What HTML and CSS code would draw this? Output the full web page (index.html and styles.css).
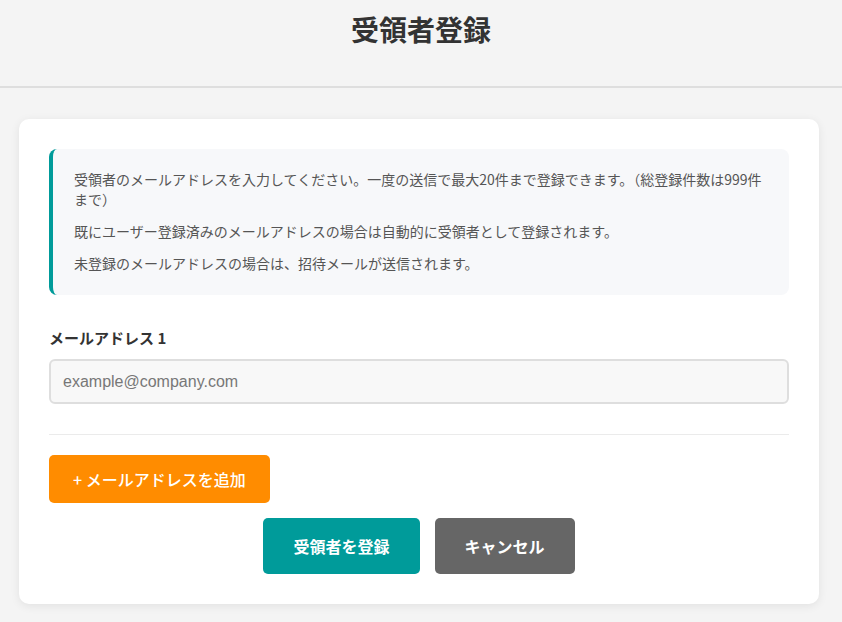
FILE: index.html
```html
<!DOCTYPE html>
<html lang="ja">

<head>
  <meta charset="utf-8">
  <title>受領者登録</title>
  <link rel="stylesheet" href="styles.css">
</head>

<body>
  <header class="page-header">
    <h1 class="page-title">受領者登録</h1>
  </header>

  <main class="card">
    <div class="info-box">
      <p>受領者のメールアドレスを入力してください。一度の送信で最大20件まで登録できます。（総登録件数は999件まで）</p>
      <p>既にユーザー登録済みのメールアドレスの場合は自動的に受領者として登録されます。</p>
      <p>未登録のメールアドレスの場合は、招待メールが送信されます。</p>
    </div>

    <div class="field">
      <label class="field-label" for="email1">メールアドレス 1</label>
      <input class="field-input" id="email1" type="email" placeholder="example@company.com">
    </div>

    <hr class="divider">

    <button class="add-button">+ メールアドレスを追加</button>

    <div class="actions">
      <button class="submit-button">受領者を登録</button>
      <button class="cancel-button">キャンセル</button>
    </div>
  </main>
</body>

</html>
```

FILE: styles.css
```css
body {
  margin: 0;
  background-color: #f4f4f4;
  font-family: "Noto Sans CJK JP", "Noto Sans", sans-serif;
  color: #333;
}

.page-header {
  height: 86px;
  border-bottom: 2px solid #dedede;
  text-align: center;
}

.page-title {
  margin: 0;
  padding-top: 12px;
  font-size: 28px;
  line-height: 34px;
  font-weight: bold;
  color: #333;
}

.card {
  margin: 31px 23px 18px 19px;
  padding: 30px;
  background-color: white;
  border-radius: 10px;
  box-shadow: 0 2px 10px rgba(0, 0, 0, 0.08);
}

.info-box {
  background-color: #f7f8fa;
  border-left: 4px solid #009b9a;
  border-radius: 8px;
  padding: 20px 20px 22px 21px;
  margin-bottom: 32px;
}

.info-box p {
  margin: 0 0 12px;
  font-size: 14px;
  line-height: 20px;
  color: #555;
}

.info-box p:last-child {
  margin-bottom: 0;
}

.field-label {
  display: block;
  font-size: 15px;
  line-height: 22px;
  font-weight: bold;
  color: #333;
  margin-bottom: 10px;
}

.field-input {
  display: block;
  width: 100%;
  box-sizing: border-box;
  height: 45px;
  padding: 0 12px;
  border: 2px solid #dedede;
  border-radius: 6px;
  background-color: #f8f8f8;
  font-family: "Liberation Sans", Arial, sans-serif;
  font-size: 16px;
  color: #333;
}

.field-input::placeholder {
  color: #777;
}

.divider {
  border: none;
  border-top: 1px solid #ebebeb;
  margin: 30px 0 20px;
}

button {
  font-family: "Noto Sans CJK JP", "Noto Sans", sans-serif;
  font-weight: bold;
  color: white;
  border: none;
  cursor: pointer;
}

.add-button {
  height: 48px;
  padding: 0 24px;
  background-color: #ff8c00;
  border-radius: 5px;
  font-size: 16px;
  font-weight: 500;
}

.actions {
  display: flex;
  justify-content: center;
  gap: 15px;
  margin-top: 15px;
}

.submit-button,
.cancel-button {
  height: 56px;
  padding: 0 30px;
  border-radius: 5px;
  font-size: 16px;
}

.submit-button {
  background-color: #009b9a;
}

.cancel-button {
  background-color: #666;
}
```
